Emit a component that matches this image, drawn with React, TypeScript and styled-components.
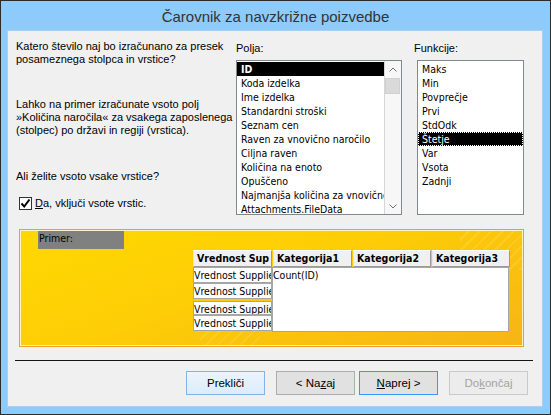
import styled, { createGlobalStyle } from "styled-components";

const GlobalStyle = createGlobalStyle`
  html, body {
    margin: 0;
    padding: 0;
    background: #ffffff;
  }
  body {
    overflow: hidden;
  }
`;

const UI_FONT = `"Liberation Sans", Arial, sans-serif`;
const LIST_FONT = `"DejaVu Sans Condensed", "DejaVu Sans", sans-serif`;

const Window = styled.div`
  width: 551px;
  height: 415px;
  box-sizing: border-box;
  border: 1px solid #2b2b2b;
  background: #8ecbfa;
  display: flex;
  flex-direction: column;
  font-family: ${UI_FONT};
  color: #000;
`;

const TitleBar = styled.div`
  height: 29px;
  flex-shrink: 0;
  display: flex;
  align-items: center;
  justify-content: center;
  font-size: 15px;
  color: #333;
  padding-top: 2px;
  box-sizing: border-box;
`;

const Client = styled.div`
  flex: 1;
  min-height: 0;
  margin: 0 7px 7px 6px;
  border: 1px solid #a9d0f2;
  background: #f0f0f0;
  display: flex;
  flex-direction: column;
  & > * {
    flex-shrink: 0;
  }
`;

const TopSection = styled.div`
  display: grid;
  grid-template-columns: 220px 166px 1fr;
  padding: 9px 0 0 8px;
`;

const TextColumn = styled.div`
  display: flex;
  flex-direction: column;
  font-size: 11px;
  line-height: 13px;
  white-space: nowrap;
`;

const Para = styled.p<{ $gap: number }>`
  margin: ${(p) => p.$gap}px 0 0 0;
`;

const CheckRow = styled.label`
  display: flex;
  align-items: center;
  gap: 3px;
  margin: 14px 0 0 3px;
`;

const CheckBox = styled.span`
  width: 13px;
  height: 13px;
  box-sizing: border-box;
  border: 1px solid #333;
  background: #fff;
  display: flex;
  align-items: center;
  justify-content: center;
`;

const ListColumn = styled.div<{ $indent: number }>`
  display: flex;
  flex-direction: column;
  padding-left: ${(p) => p.$indent}px;
`;

const FieldLabel = styled.div`
  font-size: 11px;
  line-height: 14px;
  margin: 1px 0 5px 0;
`;

const ListBox = styled.div<{ $width: number; $shift: number }>`
  width: ${(p) => p.$width}px;
  height: 155px;
  margin-left: ${(p) => p.$shift}px;
  box-sizing: border-box;
  border: 1px solid #828790;
  background: #fff;
  display: flex;
  overflow: hidden;
`;

const Items = styled.div`
  flex: 1;
  min-width: 0;
  padding-top: 1px;
  font-family: ${LIST_FONT};
  font-size: 10.5px;
`;

const Item = styled.div<{ $selected?: boolean; $focus?: boolean }>`
  height: 14px;
  line-height: 14px;
  padding-left: 4px;
  white-space: nowrap;
  overflow: hidden;
  background: ${(p) => (p.$selected ? "#000" : "transparent")};
  color: ${(p) => (p.$selected ? "#fff" : "#000")};
  font-weight: ${(p) => (p.$selected && !p.$focus ? "bold" : "normal")};
  outline: ${(p) => (p.$focus ? "1px dotted #fff" : "none")};
  outline-offset: -1px;
`;

const ScrollBar = styled.div`
  width: 16px;
  border-left: 1px solid #d6d6d6;
  background: #f7f7f7;
  display: flex;
  flex-direction: column;
`;

const ScrollArrow = styled.div`
  height: 16px;
  display: flex;
  align-items: center;
  justify-content: center;
  background: #f7f7f7;
`;

const ScrollThumb = styled.div`
  height: 16px;
  margin: 1px 1px 0 0;
  background: #dadada;
  border: 1px solid #d0d0d0;
  box-sizing: border-box;
`;

const ScrollTrack = styled.div`
  flex: 1;
`;

const SamplePanel = styled.div`
  width: 505px;
  height: 118px;
  margin: 14px 0 0 11px;
  box-sizing: border-box;
  border: 1px solid #ef9f2c;
  box-shadow: inset 0 0 0 1px #fff3c4;
  padding: 1px 0 0 1px;
  background:
    repeating-linear-gradient(135deg, rgba(255, 255, 255, 0) 0 6px, rgba(255, 255, 255, 0.12) 6px 8px) 440px 0 / 70px 40px no-repeat,
    repeating-linear-gradient(135deg, rgba(255, 255, 255, 0) 0 6px, rgba(255, 255, 255, 0.1) 6px 8px) 180px 100px / 60px 20px no-repeat,
    linear-gradient(160deg, #ffd800 0%, #fdcd06 45%, #f9bd10 80%, #f7b416 100%);
  display: flex;
  flex-direction: column;
  font-family: ${LIST_FONT};
  font-size: 10.5px;
`;

const SampleLabel = styled.div`
  width: 86px;
  height: 18px;
  margin-left: 17px;
  background: #808080;
  color: #000;
  line-height: 14px;
  padding-left: 1px;
  box-sizing: border-box;
`;

const Table = styled.div`
  margin: 1px 0 0 172px;
  display: flex;
  flex-direction: column;
`;

const HeaderRow = styled.div`
  display: flex;
  gap: 1px;
`;

const HeaderCell = styled.div<{ $width: number }>`
  width: ${(p) => p.$width}px;
  height: 17px;
  box-sizing: border-box;
  background: #f0f0f0;
  border: 1px solid;
  border-color: #ffffff #9a9a9a #9a9a9a #e6e6e6;
  font-weight: bold;
  line-height: 15px;
  padding-left: 3px;
  white-space: nowrap;
  overflow: hidden;
`;

const Body = styled.div`
  display: flex;
`;

const RowColumn = styled.div`
  width: 79px;
  display: flex;
  flex-direction: column;
`;

const RowCell = styled.div<{ $height: number; $gap: number }>`
  height: ${(p) => p.$height}px;
  margin-top: ${(p) => p.$gap}px;
  box-sizing: border-box;
  background: #fff;
  border: 1px solid #a6a6a6;
  line-height: 14px;
  white-space: nowrap;
  overflow: hidden;
`;

const ValueBox = styled.div`
  width: 237px;
  height: 65px;
  box-sizing: border-box;
  background: #fff;
  border: 1px solid #a6a6a6;
  line-height: 14px;
`;

const Footer = styled.div`
  margin-top: auto;
  padding-bottom: 11px;
  display: flex;
  flex-direction: column;
`;

const Separator = styled.div`
  height: 1px;
  margin: 0 9px 0 7px;
  background: #151515;
`;

const ButtonRow = styled.div`
  display: flex;
  justify-content: flex-end;
  margin-top: 10px;
  padding-right: 14px;
`;

type Variant = "cancel" | "normal" | "default" | "disabled";

const Button = styled.button<{ $variant: Variant; $space: number }>`
  width: 79px;
  height: 24px;
  margin-left: ${(p) => p.$space}px;
  box-sizing: border-box;
  font-family: ${UI_FONT};
  font-size: 11.5px;
  padding: 0;
  border: 1px solid
    ${(p) =>
      p.$variant === "cancel"
        ? "#7eb4ea"
        : p.$variant === "default"
        ? "#3399ff"
        : p.$variant === "disabled"
        ? "#cacaca"
        : "#adadad"};
  background: ${(p) =>
    p.$variant === "cancel"
      ? "linear-gradient(#ecf4fc, #dcecfc)"
      : p.$variant === "disabled"
      ? "#ececec"
      : "#e1e1e1"};
  color: ${(p) => (p.$variant === "disabled" ? "#a3a3a3" : "#000")};
`;

const fields = [
  "ID",
  "Koda izdelka",
  "Ime izdelka",
  "Standardni stroški",
  "Seznam cen",
  "Raven za vnovično naročilo",
  "Ciljna raven",
  "Količina na enoto",
  "Opuščeno",
  "Najmanjša količina za vnovično",
  "Attachments.FileData",
];

const functions = ["Maks", "Min", "Povprečje", "Prvi", "StdOdk", "Štetje", "Var", "Vsota", "Zadnji"];

const rows = [
  { height: 16, gap: 0 },
  { height: 16, gap: 0 },
  { height: 14, gap: 2 },
  { height: 16, gap: 0 },
];

function Chevron({ up }: { up?: boolean }) {
  return (
    <svg width="8" height="5" viewBox="0 0 8 5">
      <path
        d={up ? "M0.5 4.5 L4 1 L7.5 4.5" : "M0.5 0.5 L4 4 L7.5 0.5"}
        fill="none"
        stroke="#707070"
        strokeWidth="1"
      />
    </svg>
  );
}

export default function App() {
  return (
    <>
      <GlobalStyle />
      <Window>
        <TitleBar>Čarovnik za navzkrižne poizvedbe</TitleBar>
        <Client>
          <TopSection>
            <TextColumn>
              <Para $gap={0}>
                Katero število naj bo izračunano za presek
                <br />
                posameznega stolpca in vrstice?
              </Para>
              <Para $gap={32}>
                Lahko na primer izračunate vsoto polj
                <br />
                »Količina naročila« za vsakega zaposlenega
                <br />
                (stolpec) po državi in regiji (vrstica).
              </Para>
              <Para $gap={33}>Ali želite vsoto vsake vrstice?</Para>
              <CheckRow>
                <CheckBox>
                  <svg width="11" height="11" viewBox="0 0 11 11">
                    <path d="M1.5 5.5 L4.2 8.5 L9.5 1.5" fill="none" stroke="#000" strokeWidth="2" />
                  </svg>
                </CheckBox>
                <span>
                  <u>D</u>a, vključi vsote vrstic.
                </span>
              </CheckRow>
            </TextColumn>

            <ListColumn $indent={0}>
              <FieldLabel>Polja:</FieldLabel>
              <ListBox $width={166} $shift={0}>
                <Items>
                  {fields.map((f, i) => (
                    <Item key={f} $selected={i === 0}>
                      {f}
                    </Item>
                  ))}
                </Items>
                <ScrollBar>
                  <ScrollArrow>
                    <Chevron up />
                  </ScrollArrow>
                  <ScrollThumb />
                  <ScrollTrack />
                  <ScrollArrow>
                    <Chevron />
                  </ScrollArrow>
                </ScrollBar>
              </ListBox>
            </ListColumn>

            <ListColumn $indent={12}>
              <FieldLabel>Funkcije:</FieldLabel>
              <ListBox $width={107} $shift={3}>
                <Items>
                  {functions.map((f) => (
                    <Item key={f} $selected={f === "Štetje"} $focus={f === "Štetje"}>
                      {f}
                    </Item>
                  ))}
                </Items>
              </ListBox>
            </ListColumn>
          </TopSection>

          <SamplePanel>
            <SampleLabel>Primer:</SampleLabel>
            <Table>
              <HeaderRow>
                <HeaderCell $width={79}>Vrednost Sup</HeaderCell>
                <HeaderCell $width={79}>Kategorija1</HeaderCell>
                <HeaderCell $width={78}>Kategorija2</HeaderCell>
                <HeaderCell $width={78}>Kategorija3</HeaderCell>
              </HeaderRow>
              <Body>
                <RowColumn>
                  {rows.map((r, i) => (
                    <RowCell key={i} $height={r.height} $gap={r.gap}>
                      Vrednost Supplie
                    </RowCell>
                  ))}
                </RowColumn>
                <ValueBox>Count(ID)</ValueBox>
              </Body>
            </Table>
          </SamplePanel>

          <Footer>
            <Separator />
            <ButtonRow>
              <Button $variant="cancel" $space={0}>
                Prekliči
              </Button>
              <Button $variant="normal" $space={11}>
                &lt; Na<u>z</u>aj
              </Button>
              <Button $variant="default" $space={4}>
                <u>N</u>aprej &gt;
              </Button>
              <Button $variant="disabled" $space={11} disabled>
                Do<u>k</u>ončaj
              </Button>
            </ButtonRow>
          </Footer>
        </Client>
      </Window>
    </>
  );
}
